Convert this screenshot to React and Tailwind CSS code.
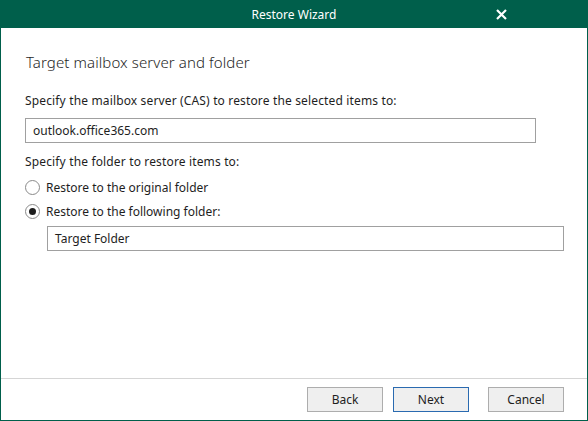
import React, { useState } from 'react';

const RestoreWizard = () => {
  const [choice, setChoice] = useState('following');

  return (
    <div className="w-[588px] h-[421px] flex flex-col bg-white font-['Noto_Sans',sans-serif] text-[12px] text-[#1e1e1e] overflow-hidden">
      <div className="h-[28px] shrink-0 bg-[#005f4b] flex items-center relative">
        <div className="flex-1 text-center text-white text-[12px] pt-[1px]">Restore Wizard</div>
        <svg className="absolute left-[496px] top-[9px]" width="11" height="11" viewBox="0 0 11 11">
          <path d="M1 1 L10 10 M10 1 L1 10" stroke="#fff" strokeWidth="2.2" />
        </svg>
      </div>
      <div className="flex-1 flex flex-col border-x border-b border-[#005f4b]">
        <div className="flex-1 flex flex-col pl-[24px] pr-[51px]">
          <div className="text-[15px] mt-[24px] ml-[1px] leading-[20px] tracking-[0.1px] font-light text-[#262626]">Target mailbox server and folder</div>
          <div className="mt-[21px] leading-[16px] tracking-[0.15px]">Specify the mailbox server (CAS) to restore the selected items to:</div>
          <div className="mt-[9px] h-[25px] border border-[#a0a0a0] flex items-center px-[7px] w-[511px]">outlook.office365.com</div>
          <div className="mt-[11px] leading-[16px] tracking-[0.15px]">Specify the folder to restore items to:</div>
          <label className="mt-[9px] flex items-center gap-[6px] h-[17px] cursor-default" onClick={() => setChoice('original')}>
            <span className="w-[15px] h-[15px] rounded-full border border-[#8a8a8a] bg-white flex items-center justify-center">
              {choice === 'original' && <span className="w-[7px] h-[7px] rounded-full bg-[#1e1e1e]" />}
            </span>
            <span>Restore to the original folder</span>
          </label>
          <label className="mt-[7px] flex items-center gap-[6px] h-[17px] cursor-default" onClick={() => setChoice('following')}>
            <span className="w-[15px] h-[15px] rounded-full border border-[#8a8a8a] bg-white flex items-center justify-center">
              {choice === 'following' && <span className="w-[7px] h-[7px] rounded-full bg-[#1e1e1e]" />}
            </span>
            <span>Restore to the following folder:</span>
          </label>
          <div className="mt-[6px] ml-[22px] h-[25px] border border-[#a0a0a0] flex items-center px-[7px] w-[517px]">Target Folder</div>
        </div>
        <div className="h-[42px] shrink-0 border-t border-[#d5d5d5] flex items-start justify-end pt-[8px] pr-[23px] gap-[10px]">
          <button className="w-[76px] h-[25px] bg-[#efefef] border border-[#adadad] text-[12px]">Back</button>
          <button className="w-[76px] h-[25px] bg-[#efefef] border border-[#2a6ab0] text-[12px] mr-[9px]">Next</button>
          <button className="w-[76px] h-[25px] bg-[#efefef] border border-[#adadad] text-[12px]">Cancel</button>
        </div>
      </div>
    </div>
  );
};

export default function App() {
  return <RestoreWizard />;
}
